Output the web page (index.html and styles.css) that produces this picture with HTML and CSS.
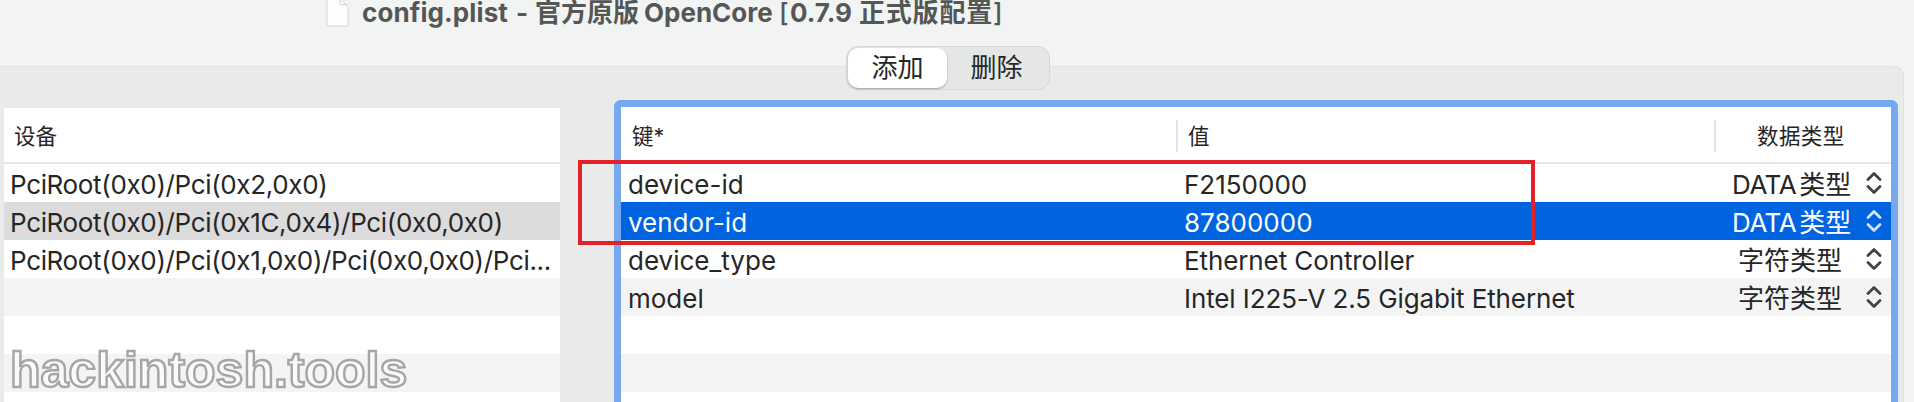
FILE: index.html
```html
<!DOCTYPE html>
<html lang="zh-CN">
<head>
<meta charset="utf-8">
<title>config.plist</title>
<link rel="stylesheet" href="styles.css">
</head>
<body>
<svg class="defs" width="0" height="0"><symbol id="updown" viewBox="0 0 16 24"><path d="M2 8.5 8 2.6l6 5.9M2 15.5l6 5.9 6-5.9" fill="none" stroke="currentColor" stroke-width="2.8" stroke-linecap="round" stroke-linejoin="round"/></symbol></svg>
<div class="window">
  <header class="titlebar">
    <svg class="doc" width="26" height="30" viewBox="0 0 26 30"><path d="M1 0h13l8 9.500v18.500H1z" fill="#fcfdfd" stroke="#d5d6d6"/><path d="M14 0v6.500h7" fill="none" stroke="#d5d6d6"/></svg>
    <h1 class="title"><span class="t-file">config.plist</span><span class="t-dash">-</span><span class="t-zh1">官方原版</span><span class="t-oc">OpenCore</span><span class="t-br">[</span><span class="t-ver">0.7.9</span><span class="t-zh2">正式版配置</span><span class="t-end">]</span></h1>
  </header>
  <main class="group">
    <div class="segmented"><span class="segment selected">添加</span><span class="segment">删除</span></div>
    <section class="table devices">
      <div class="head"><span>设备</span></div>
      <div class="row"><span class="path">PciRoot(0x0)/Pci(0x2,0x0)</span></div>
      <div class="row current"><span class="path">PciRoot(0x0)/Pci(0x1C,0x4)/Pci(0x0,0x0)</span></div>
      <div class="row"><span class="path">PciRoot(0x0)/Pci(0x1,0x0)/Pci(0x0,0x0)/Pci...</span></div>
      <div class="row alt"></div><div class="row"></div><div class="row alt"></div><div class="row"></div>
    </section>
    <section class="table props">
      <div class="head"><span class="key">键*</span><span class="value">值</span><span class="type">数据类型</span></div>
      <div class="row"><span class="key">device-id</span><span class="value">F2150000</span><span class="type"><span class="kind"><span class="latin">DATA</span>类型</span><svg class="updown"><use href="#updown"/></svg></span></div>
      <div class="row active"><span class="key">vendor-id</span><span class="value">87800000</span><span class="type"><span class="kind"><span class="latin">DATA</span>类型</span><svg class="updown"><use href="#updown"/></svg></span></div>
      <div class="row"><span class="key">device_type</span><span class="value text">Ethernet Controller</span><span class="type"><span class="kind">字符类型</span><svg class="updown"><use href="#updown"/></svg></span></div>
      <div class="row alt"><span class="key">model</span><span class="value text">Intel I225-V 2.5 Gigabit Ethernet</span><span class="type"><span class="kind">字符类型</span><svg class="updown"><use href="#updown"/></svg></span></div>
      <div class="row"></div><div class="row alt"></div><div class="row"></div>
    </section>
  </main>
  <div class="highlight"></div>
  <div class="watermark">hackintosh.tools</div>
</div>
</body>
</html>
```
FILE: styles.css
```css
* { box-sizing: border-box; }
body { margin: 0; background: #f1f4f3; color: #262626; font-family: Inter, "Noto Sans CJK SC", sans-serif; font-size: 26px; }
.defs { position: absolute; }
.window { position: relative; width: 1914px; height: 402px; overflow: hidden; background: #f1f4f3; }
.titlebar { display: flex; height: 66px; padding-left: 326px; }
.doc { flex: none; margin-top: -2px; }
.title { display: flex; margin: 0 0 0 10px; height: 28px; line-height: 26px; font-size: 26px; font-weight: 700; color: #555757; white-space: nowrap; }
.title span { flex: none; }
.t-file { width: 154px; letter-spacing: .1px; }
.t-dash { width: 19px; }
.t-zh1 { width: 109px; }
.t-oc { width: 135px; letter-spacing: 0; }
.t-br { width: 11px; font-weight: 500; }
.t-ver { width: 69px; }
.t-zh2 { width: 134px; letter-spacing: .8px; }
.t-end { font-weight: 500; }
.group { position: relative; display: grid; grid-template-columns: 556px 1284px; column-gap: 54px; width: 1924px; height: 400px; margin-left: -20px; padding: 33px 0 0 23px; background: #e8ebea; border: 1px solid #dfe2e1; border-radius: 9px; }
.segmented { position: absolute; left: 865px; top: -21px; display: flex; width: 204px; height: 44px; padding: 1px; border: 1px solid #d6d9d8; border-radius: 12px; background: #e4e7e6; }
.segment { width: 99px; height: 40px; line-height: 39px; text-align: center; font-size: 26px; }
.segment.selected { width: 99px; background: #fff; border-radius: 10px; box-shadow: 0 1px 2px rgba(0,0,0,.3); }
.table { background: #fff; overflow: hidden; }
.devices { margin-top: 8px; }
.props { border: 7px solid #76a9ee; border-radius: 7px 7px 0 0; padding-top: 1px; border-bottom: 0; }
.head { display: flex; height: 56px; padding-top: 1px; border-bottom: 2px solid #e5e6e5; font-size: 21.500px; line-height: 32px; align-items: center; }
.devices .head { padding-left: 10px; padding-top: 2px; }
.row { display: flex; height: 38px; padding-top: 3px; line-height: 35px; align-items: center; white-space: nowrap; }
.alt { background: #f4f4f4; }
.current { background: #dcdcdc; }
.active { background: #0064e1; color: #fff; }
.path { padding-left: 6px; letter-spacing: -.34px; }
.key { width: 555px; padding-left: 7px; }
.value { width: 538px; padding-left: 8px; }
.value.text { letter-spacing: -.1px; }
.type { display: flex; align-items: center; width: 177px; }
.head .key { padding-left: 11px; }
.head .value, .head .type { height: 32px; line-height: 32px; border-left: 2px solid #e3e4e3; }
.head .value { padding-left: 10px; }
.head .type { padding-left: 41px; letter-spacing: .4px; }
.row .type .kind { width: 134px; text-align: center; padding-left: 18px; }
.row .type .latin { margin-right: 3px; letter-spacing: -.5px; }
.updown { width: 16px; height: 24px; margin: -3px 0 0 18px; color: #444; }
.active .updown { color: #cfe3ff; }
.highlight { position: absolute; left: 578px; top: 160px; width: 957px; height: 85px; border: 4px solid #e22129; }
.watermark { position: absolute; left: 10px; top: 341px; font: bold 50px/58px "Liberation Sans", sans-serif; color: #fafafa; -webkit-text-stroke: 2.4px #a6a6a6; text-shadow: 0 0 1px #999; }
```
